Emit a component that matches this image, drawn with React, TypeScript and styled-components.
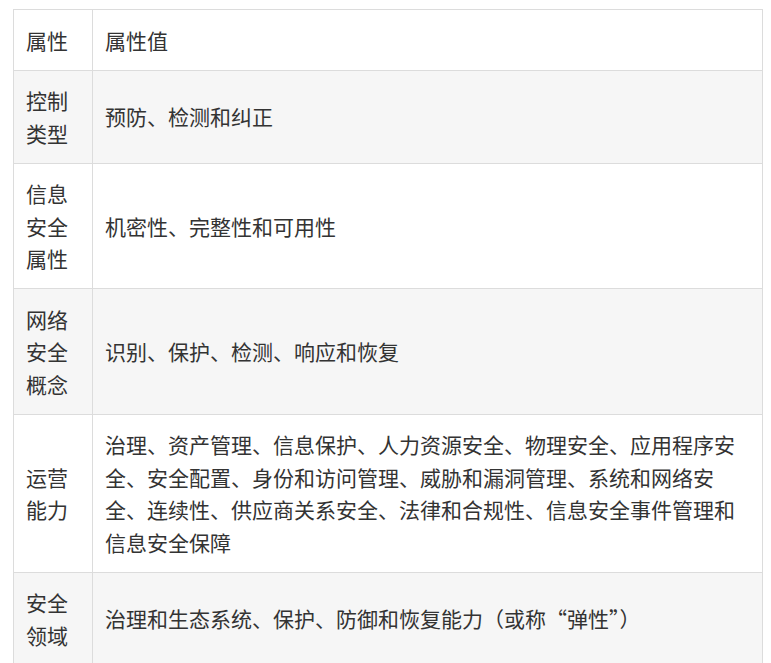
import React from "react";
import styled, { createGlobalStyle } from "styled-components";

const Global = createGlobalStyle`
  body { margin: 0; background: #fff; font-family: "Noto Sans CJK SC", "Liberation Sans", sans-serif; }
`;

const Wrap = styled.div`
  padding: 9px 9px 0 13px;
`;

const Table = styled.table`
  border-collapse: collapse;
  width: 750px;
  color: #333;
  font-size: 21px;
  line-height: 32.5px;
`;

const Row = styled.tr<{ $alt: boolean }>`
  background: ${(p) => (p.$alt ? "#f6f6f6" : "#fff")};
`;

const Cell = styled.td<{ $key?: boolean }>`
  border: 1.5px solid #dcdcdc;
  padding: 13.5px 12px;
  vertical-align: middle;
  width: ${(p) => (p.$key ? "54px" : "auto")};
`;

const rows: [string, string][] = [
  ["属性", "属性值"],
  ["控制类型", "预防、检测和纠正"],
  ["信息安全属性", "机密性、完整性和可用性"],
  ["网络安全概念", "识别、保护、检测、响应和恢复"],
  ["运营能力", "治理、资产管理、信息保护、人力资源安全、物理安全、应用程序安全、安全配置、身份和访问管理、威胁和漏洞管理、系统和网络安全、连续性、供应商关系安全、法律和合规性、信息安全事件管理和信息安全保障"],
  ["安全领域", "治理和生态系统、保护、防御和恢复能力（或称“弹性”）"],
];

export default function App() {
  return (
    <>
      <Global />
      <Wrap>
        <Table>
          <tbody>
            {rows.map(([k, v], i) => (
              <Row key={i} $alt={i % 2 === 1}>
                <Cell $key>{k}</Cell>
                <Cell>{v}</Cell>
              </Row>
            ))}
          </tbody>
        </Table>
      </Wrap>
    </>
  );
}
